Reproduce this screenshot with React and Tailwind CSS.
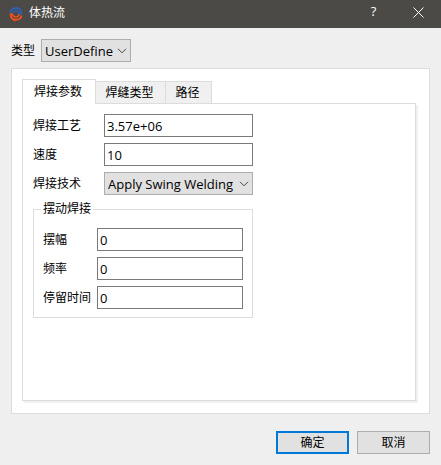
import React, { useState } from 'react';

const TABS = [
  { name: '焊接参数', width: 'w-[74px]' },
  { name: '焊缝类型', width: 'w-[71px]' },
  { name: '路径', width: 'w-[47px]' },
];

const Logo = () => (
  <svg viewBox="0 0 14 16" className="h-4 w-3.5" fill="none" aria-hidden="true">
    <path d="M1.500 6.500C1.800 3.600 4 2.300 7.500 2.300 10.600 2.300 12.400 4.400 12.500 8.500" stroke="#2f5fae" strokeWidth="1.900" />
    <path d="M5.500 2.800 9 .6 9.500 3" fill="#2f5fae" />
    <path d="M4 8C4 5.800 5.600 4.800 7.500 5 9.200 5.200 10.400 6.400 11.500 9" stroke="#2f5fae" strokeWidth="1.400" />
    <path d="M12.500 9.500C12.200 12.400 10 13.700 6.500 13.700 3.400 13.700 1.600 11.600 1.500 7.500" stroke="#f4511e" strokeWidth="1.900" />
    <path d="M8.500 13.200 5 15.400 4.500 13" fill="#f4511e" />
    <path d="M10 8C10 10.200 8.400 11.200 6.500 11 4.800 10.800 3.600 9.600 2.500 7" stroke="#f4511e" strokeWidth="1.400" />
  </svg>
);

const SelectBox = ({ id, options, className }) => (
  <div className={`relative ${className}`}>
    <select
      id={id}
      className="block h-[23px] w-full appearance-none border border-[#adadad] bg-[#e1e1e1] pl-[3px] pr-4 text-[13px] leading-5"
    >
      {options.map((option) => (
        <option key={option}>{option}</option>
      ))}
    </select>
    <svg
      viewBox="0 0 10 6"
      className="pointer-events-none absolute right-1 top-[9px] h-1.5 w-2.5"
      fill="none"
      stroke="#444"
      aria-hidden="true"
    >
      <path d="M1 .8 5 4.800 9 .8" />
    </svg>
  </div>
);

const Field = ({ id, label, labelWidth, defaultValue }) => (
  <div className="flex items-center">
    <label htmlFor={id} className={`shrink-0 pt-px ${labelWidth}`}>{label}</label>
    <input
      id={id}
      type="text"
      defaultValue={defaultValue}
      className="h-[23px] min-w-0 flex-1 border border-[#7a7a7a] bg-white px-0.5 text-[13px] leading-5"
    />
  </div>
);

const WeldingParams = () => (
  <div className="w-[220px] space-y-1.5">
    <Field id="process" label="焊接工艺" labelWidth="w-[71px]" defaultValue="3.57e+06" />
    <Field id="speed" label="速度" labelWidth="w-[71px]" defaultValue="10" />
    <div className="flex items-center">
      <label htmlFor="technique" className="w-[71px] shrink-0 pt-px">焊接技术</label>
      <SelectBox id="technique" options={['Apply Swing Welding']} className="flex-1" />
    </div>
    <fieldset className="min-w-0 border border-[#dcdcdc] px-[9px] pb-2 pt-[11px]">
      <legend className="-ml-0.5 px-0.5 leading-4">摆动焊接</legend>
      <div className="space-y-1.5">
        <Field id="amplitude" label="摆幅" labelWidth="w-[54px]" defaultValue="0" />
        <Field id="frequency" label="频率" labelWidth="w-[54px]" defaultValue="0" />
        <Field id="dwell" label="停留时间" labelWidth="w-[54px]" defaultValue="0" />
      </div>
    </fieldset>
  </div>
);

const App = () => {
  const [activeTab, setActiveTab] = useState(0);

  return (
    <div className="flex min-h-screen flex-col bg-[#efefef] font-['Open_Sans','Noto_Sans_CJK_SC',sans-serif] text-xs text-black">
      {/* Title bar */}
      <header className="flex h-7 items-center bg-[#4b4a46] pl-[9px] text-white">
        <Logo />
        <h1 className="ml-1.5 flex-1 pb-0.5">体热流</h1>
        <button type="button" aria-label="Help" className="h-full w-[45px] pb-1 text-[13px]">?</button>
        <button type="button" aria-label="Close" className="flex h-full w-[45px] items-center justify-center pb-1">
          <svg viewBox="0 0 11 11" className="h-[11px] w-[11px]" stroke="currentColor" fill="none" aria-hidden="true">
            <path d="M.5.5 10.500 10.500M10.500.5.5 10.500" />
          </svg>
        </button>
      </header>

      <main className="flex flex-1 flex-col p-[11px]">
        <div className="flex items-center">
          <label htmlFor="type" className="w-[30px]">类型</label>
          <SelectBox id="type" options={['UserDefine']} className="w-[90px]" />
        </div>

        <div className="mt-1.5 flex flex-1 flex-col border border-[#dcdcdc] bg-white px-2.5 pb-3 pt-2.5">
          {/* Tabs */}
          <div role="tablist" className="z-10 flex items-end">
            {TABS.map((tab, index) => (
              <button
                key={tab.name}
                type="button"
                role="tab"
                aria-selected={index === activeTab}
                onClick={() => setActiveTab(index)}
                className={`border border-b-0 border-[#dcdcdc] pr-0.5 ${tab.width} ${
                  index === activeTab ? '-mb-px h-[25px] bg-white' : '-ml-px h-[22px] bg-[#f0f0f0]'
                }`}
              >
                {tab.name}
              </button>
            ))}
          </div>
          <div
            role="tabpanel"
            className="mr-[3px] flex-1 border border-[#dcdcdc] bg-white p-2.5 shadow-[2px_2px_0_#f0f0f0]"
          >
            {activeTab === 0 && <WeldingParams />}
          </div>
        </div>

        {/* Dialog buttons */}
        <footer className="mt-[17px] flex justify-end gap-2">
          <button type="submit" className="h-[23px] w-[73px] border-2 border-[#0078d7] bg-[#e1e1e1]">确定</button>
          <button type="button" className="h-[23px] w-[73px] border border-[#adadad] bg-[#e1e1e1]">取消</button>
        </footer>
      </main>
    </div>
  );
};

export default App;
